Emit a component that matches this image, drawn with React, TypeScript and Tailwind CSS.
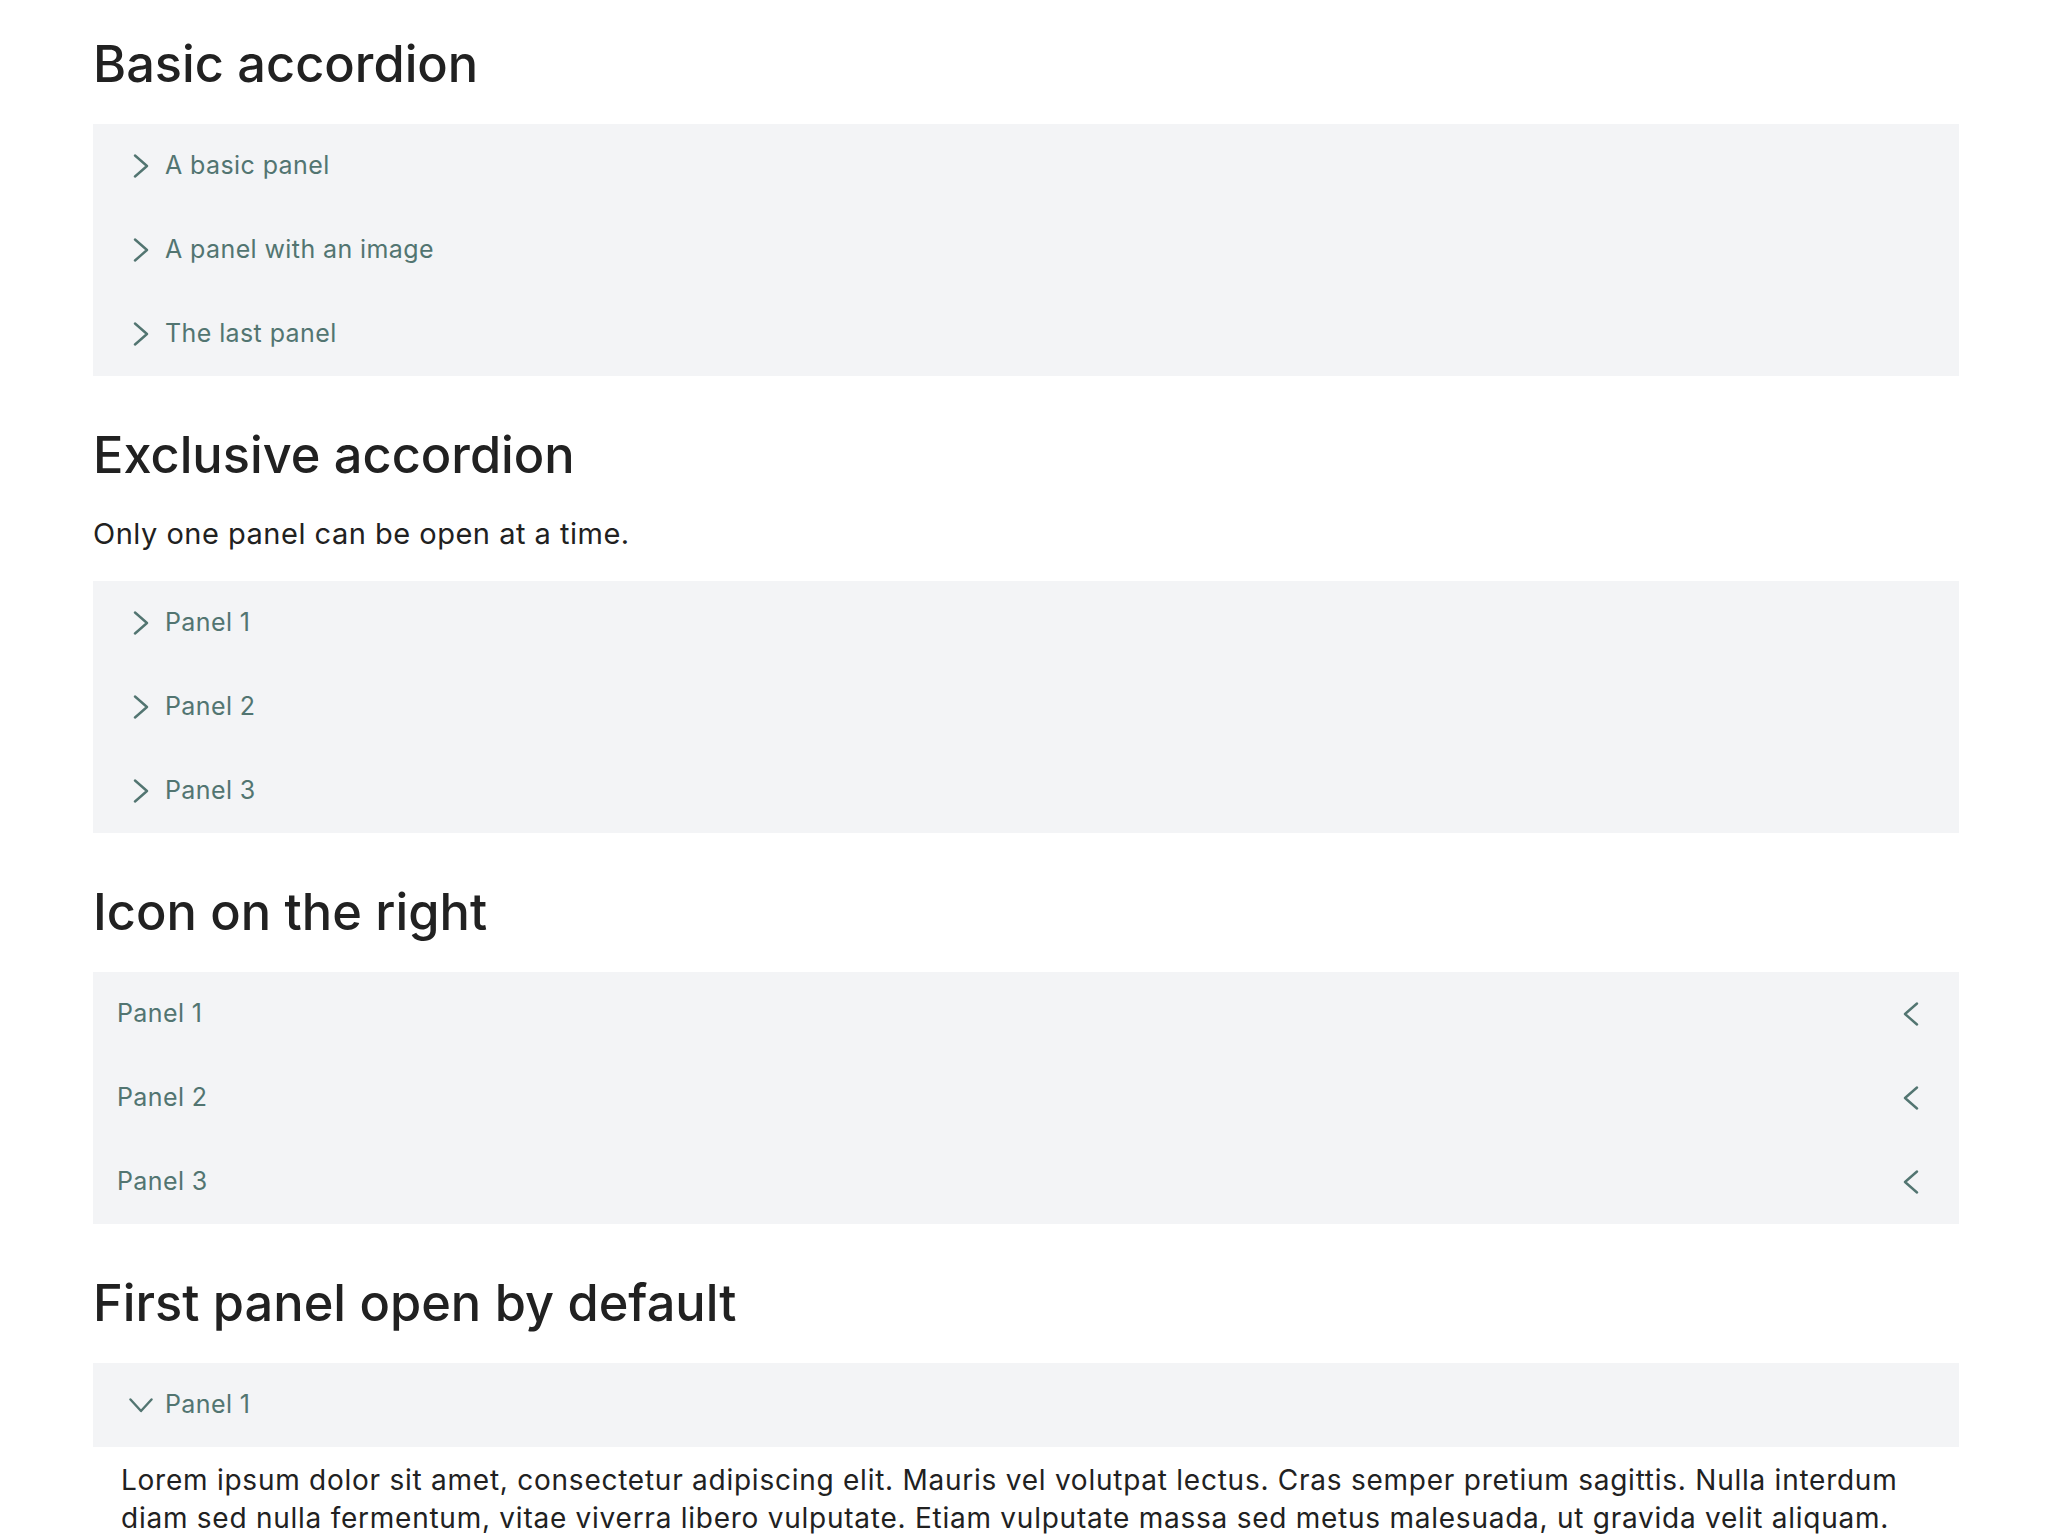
import React from "react";

const TEAL = "#527571";

function ChevronRight() {
  return (
    <svg width="16" height="24" viewBox="0 0 16 24" fill="none">
      <polyline points="2,1.5 14,12 2,22.5" stroke={TEAL} strokeWidth="2.4" strokeLinecap="round" strokeLinejoin="round" />
    </svg>
  );
}
function ChevronLeft() {
  return (
    <svg width="16" height="24" viewBox="0 0 16 24" fill="none">
      <polyline points="14,1.5 2,12 14,22.5" stroke={TEAL} strokeWidth="2.4" strokeLinecap="round" strokeLinejoin="round" />
    </svg>
  );
}
function ChevronDown() {
  return (
    <svg width="24" height="15" viewBox="0 0 24 15" fill="none">
      <polyline points="1.5,1.5 12,13 22.5,1.5" stroke={TEAL} strokeWidth="2.4" strokeLinecap="round" strokeLinejoin="round" />
    </svg>
  );
}

function Row({ label, icon = "left", open = false }: { label: string; icon?: "left" | "right"; open?: boolean }) {
  if (icon === "right") {
    return (
      <div className="flex h-[84px] items-center px-[24px] text-[25px] tracking-[0.4px] text-[#527571]">
        <span className="flex-1">{label}</span>
        <span className="flex w-[48px] items-center justify-center">
          <ChevronLeft />
        </span>
      </div>
    );
  }
  return (
    <div className="flex h-[84px] items-center px-[24px] text-[25px] tracking-[0.4px] text-[#527571]">
      <span className="flex w-[48px] items-center justify-center">{open ? <ChevronDown /> : <ChevronRight />}</span>
      <span>{label}</span>
    </div>
  );
}

function Heading({ children, first = false }: { children: React.ReactNode; first?: boolean }) {
  return (
    <h2 className={`${first ? "mt-0" : "mt-[47px]"} mb-[28px] text-[50.5px] leading-[64px] font-medium text-[#212121]`}>{children}</h2>
  );
}

export default function App() {
  return (
    <div
      className="min-h-screen bg-white pt-[32px] pl-[93px] pr-[89px] pb-[40px] text-[#212121]"
      style={{ fontFamily: "Inter, 'Noto Sans', sans-serif" }}
    >
      <Heading first>Basic accordion</Heading>
      <div className="bg-[#f3f4f6]">
        <Row label="A basic panel" />
        <Row label="A panel with an image" />
        <Row label="The last panel" />
      </div>

      <Heading>Exclusive accordion</Heading>
      <p className="mb-[28px] text-[29px] leading-[38px] tracking-[0.5px]">Only one panel can be open at a time.</p>
      <div className="bg-[#f3f4f6]">
        <Row label="Panel 1" />
        <Row label="Panel 2" />
        <Row label="Panel 3" />
      </div>

      <Heading>Icon on the right</Heading>
      <div className="bg-[#f3f4f6]">
        <Row label="Panel 1" icon="right" />
        <Row label="Panel 2" icon="right" />
        <Row label="Panel 3" icon="right" />
      </div>

      <Heading>First panel open by default</Heading>
      <div>
        <div className="bg-[#f3f4f6]">
          <Row label="Panel 1" open />
        </div>
        <div className="px-[28px] pt-[14px] pb-[24px] text-[28px] leading-[38px] tracking-[0.75px] text-[#212121]">
          Lorem ipsum dolor sit amet, consectetur adipiscing elit. Mauris vel volutpat lectus. Cras semper pretium sagittis. Nulla interdum diam sed nulla fermentum, vitae viverra libero vulputate. Etiam vulputate massa sed metus malesuada, ut gravida velit aliquam. Sed ut urna euismod, ultricies nisl id, fringilla nulla.
        </div>
      </div>
    </div>
  );
}
